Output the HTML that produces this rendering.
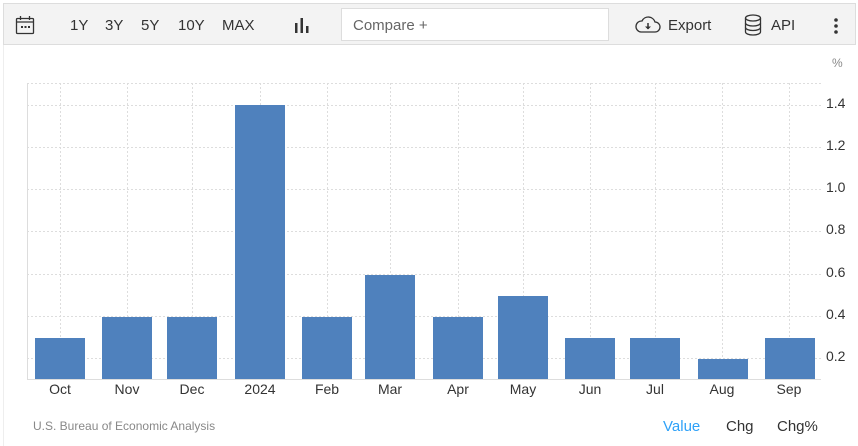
<!DOCTYPE html>
<html><head><style>
body{margin:0;width:858px;height:446px;background:#fff;font-family:"Liberation Sans",Arial,sans-serif;position:relative;overflow:hidden}
.tb{position:absolute;left:3px;top:3px;width:853px;height:42px;background:#f3f3f3;border:1px solid #ddd;box-sizing:border-box}
.t{position:absolute;top:17px;font-size:15px;color:#333}
.cmp{position:absolute;left:341px;top:8px;width:268px;height:33px;background:#fff;border:1px solid #ddd;box-sizing:border-box;font-size:15px;color:#666;padding:8px 0 0 11px}
.lb{position:absolute;font-size:14px;color:#333}
</style></head><body>
<div class="tb"></div>
<svg style="position:absolute;left:15px;top:15px" width="21" height="21" viewBox="0 0 21 21"><rect x="1.5" y="3.5" width="17" height="15" fill="none" stroke="#333" stroke-width="1.3" rx="1"/><line x1="1.5" y1="7" x2="18.5" y2="7" stroke="#333" stroke-width="1.3"/><line x1="5.5" y1="1" x2="5.5" y2="5" stroke="#333" stroke-width="1.3"/><line x1="14.5" y1="1" x2="14.5" y2="5" stroke="#333" stroke-width="1.3"/><rect x="6" y="11" width="2" height="2" fill="#333"/><rect x="9.5" y="11" width="2" height="2" fill="#333"/><rect x="13" y="11" width="2" height="2" fill="#333"/></svg>
<div class="t" style="left:70px">1Y</div><div class="t" style="left:105px">3Y</div><div class="t" style="left:141px">5Y</div><div class="t" style="left:178px">10Y</div><div class="t" style="left:222px">MAX</div>
<svg style="position:absolute;left:294px;top:17px" width="16" height="16"><rect x="1" y="6" width="2.5" height="10" fill="#333"/><rect x="6.5" y="1" width="2.5" height="15" fill="#333"/><rect x="12" y="9" width="2.5" height="7" fill="#333"/></svg>
<div class="cmp">Compare +</div>
<svg style="position:absolute;left:634px;top:15px" width="28" height="20" viewBox="0 0 28 20"><path d="M7 17 H21 A5 5 0 0 0 21 7 A7 7 0 0 0 8 6 A5.5 5.5 0 0 0 7 17 Z" fill="none" stroke="#333" stroke-width="1.3"/><line x1="14" y1="8" x2="14" y2="14" stroke="#333" stroke-width="1.5"/><path d="M11 11.5 L14 14.5 L17 11.5Z" fill="#333"/></svg>
<div class="t" style="left:668px">Export</div>
<svg style="position:absolute;left:744px;top:14px" width="18" height="22" viewBox="0 0 18 22"><g fill="none" stroke="#333" stroke-width="1.3"><ellipse cx="9" cy="4" rx="7.5" ry="3"/><path d="M1.5 4 V18 A7.5 3 0 0 0 16.5 18 V4"/><path d="M1.5 9 A7.5 3 0 0 0 16.5 9"/><path d="M1.5 13.5 A7.5 3 0 0 0 16.5 13.5"/></g></svg>
<div class="t" style="left:771px">API</div>
<svg style="position:absolute;left:833px;top:17px" width="6" height="18"><circle cx="3" cy="3" r="1.8" fill="#333"/><circle cx="3" cy="9" r="1.8" fill="#333"/><circle cx="3" cy="15" r="1.8" fill="#333"/></svg>
<div style="position:absolute;left:3px;top:45px;width:1px;height:401px;background:#eee"></div>
<svg style="position:absolute;left:0;top:0" width="858" height="446">
<g stroke="#ddd" stroke-width="1" stroke-dasharray="2,2">
<line x1="27" y1="83.5" x2="821" y2="83.5"/><line x1="27" y1="105.5" x2="821" y2="105.5"/><line x1="27" y1="147.5" x2="821" y2="147.5"/><line x1="27" y1="189.5" x2="821" y2="189.5"/><line x1="27" y1="231.5" x2="821" y2="231.5"/><line x1="27" y1="274.5" x2="821" y2="274.5"/><line x1="27" y1="316.5" x2="821" y2="316.5"/><line x1="27" y1="358.5" x2="821" y2="358.5"/>
<line x1="60.5" y1="83" x2="60.5" y2="379"/><line x1="127.5" y1="83" x2="127.5" y2="379"/><line x1="192.5" y1="83" x2="192.5" y2="379"/><line x1="260.5" y1="83" x2="260.5" y2="379"/><line x1="327.5" y1="83" x2="327.5" y2="379"/><line x1="390.5" y1="83" x2="390.5" y2="379"/><line x1="458.5" y1="83" x2="458.5" y2="379"/><line x1="523.5" y1="83" x2="523.5" y2="379"/><line x1="590.5" y1="83" x2="590.5" y2="379"/><line x1="655.5" y1="83" x2="655.5" y2="379"/><line x1="722.5" y1="83" x2="722.5" y2="379"/><line x1="789.5" y1="83" x2="789.5" y2="379"/>
</g>
<line x1="27.5" y1="83" x2="27.5" y2="380" stroke="#ddd"/><line x1="27" y1="379.5" x2="821" y2="379.5" stroke="#ddd"/>
<g fill="#4f81bd">
<rect x="35" y="338" width="50" height="41"/><rect x="102" y="317" width="50" height="62"/><rect x="167" y="317" width="50" height="62"/><rect x="235" y="105" width="50" height="274"/><rect x="302" y="317" width="50" height="62"/><rect x="365" y="275" width="50" height="104"/><rect x="433" y="317" width="50" height="62"/><rect x="498" y="296" width="50" height="83"/><rect x="565" y="338" width="50" height="41"/><rect x="630" y="338" width="50" height="41"/><rect x="698" y="359" width="50" height="20"/><rect x="765" y="338" width="50" height="41"/>
</g>
<g font-family="Liberation Sans,Arial,sans-serif" font-size="14" fill="#333" text-anchor="middle">
<text x="60" y="394">Oct</text><text x="127" y="394">Nov</text><text x="192" y="394">Dec</text><text x="260" y="394">2024</text><text x="327" y="394">Feb</text><text x="390" y="394">Mar</text><text x="458" y="394">Apr</text><text x="523" y="394">May</text><text x="590" y="394">Jun</text><text x="655" y="394">Jul</text><text x="722" y="394">Aug</text><text x="789" y="394">Sep</text>
</g>
<g font-family="Liberation Sans,Arial,sans-serif" font-size="14" fill="#333">
<text x="826" y="108">1.4</text><text x="826" y="150">1.2</text><text x="826" y="192">1.0</text><text x="826" y="234">0.8</text><text x="826" y="277">0.6</text><text x="826" y="319">0.4</text><text x="826" y="361">0.2</text>
<text x="832" y="67" font-size="12" fill="#888">%</text>
</g>
</svg>
<div class="lb" style="left:33px;top:419px;font-size:12px;color:#888">U.S. Bureau of Economic Analysis</div>
<div class="lb" style="left:663px;top:418px;font-size:15px;color:#2ea1f8">Value</div>
<div class="lb" style="left:726px;top:418px;font-size:15px">Chg</div>
<div class="lb" style="left:777px;top:418px;font-size:15px">Chg%</div>
</body></html>
